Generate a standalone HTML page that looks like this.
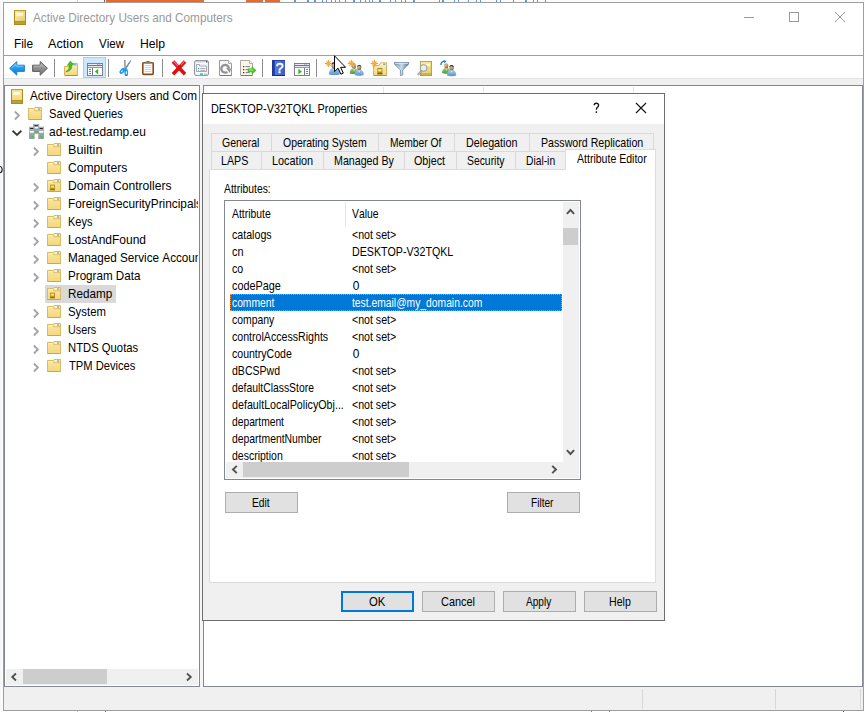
<!DOCTYPE html>
<html>
<head>
<meta charset="utf-8">
<title>Active Directory Users and Computers</title>
<style>
*{box-sizing:border-box;margin:0;padding:0}
html,body{width:865px;height:712px;overflow:hidden;background:#fff}
body{position:relative;font-kerning:none;font-family:"Liberation Sans",sans-serif;font-size:12px;color:#000}
.abs{position:absolute}
.t{position:absolute;white-space:nowrap;line-height:14px}
svg{position:absolute;overflow:visible}
#bgl{left:0;top:0;width:4px;height:712px;background:linear-gradient(90deg,#f7f7f7,#fcfcfc)}
#win{left:3px;top:2px;width:861px;height:709px;border:1px solid #9e9e9e;background:#fff}
#client{left:4px;top:79px;width:859px;height:631px;background:#f0f0f0}
#title{left:33px;top:10px;color:#999;font-size:12.4px;letter-spacing:-0.2px}
.menu{top:37px;font-size:12.4px;letter-spacing:-0.25px}
#tbline{left:4px;top:55px;width:859px;height:1px;background:#a0a0a0}
#tbline2{left:4px;top:78px;width:859px;height:1px;background:#e3e3e3}
.tsep{position:absolute;top:59px;width:1px;height:18px;background:#8c8c8c}
#tree{left:4px;top:85px;width:196px;height:602px;border:1px solid #828790;background:#fff;overflow:hidden}
#right{left:203px;top:85px;width:660px;height:602px;border:1px solid #828790;background:#fff}
.ti{position:absolute;white-space:nowrap;font-size:12.4px;line-height:18px;height:18px;letter-spacing:-0.2px}
.chev{position:absolute}
#dlg{left:202px;top:93px;width:463px;height:528px;border:1px solid #6d6d6d;background:#f0f0f0}
#dtitle{left:0;top:0;width:461px;height:30px;background:#fff}
.tab{position:absolute;height:19px;border:1px solid #d9d9d9;border-bottom:none;border-right:none;background:#f0f0f0;font-size:11.5px;line-height:17px;white-space:nowrap;letter-spacing:-0.3px}
.tab span{position:absolute;top:1px}
#panel{left:7px;top:75px;width:447px;height:415px;border:1px solid #dcdcdc;background:#fff}
.btn{position:absolute;height:21px;width:73px;border:1px solid #adadad;background:#e1e1e1;font-size:11.5px;letter-spacing:-0.3px}
.btn span{position:absolute;top:3px;line-height:14px;white-space:nowrap}
#list{left:21px;top:106px;width:357px;height:280px;border:1px solid #828790;background:#fff}
.lt{position:absolute;white-space:nowrap;font-size:11.5px;line-height:14px;letter-spacing:-0.3px}
</style>
</head>
<body>
<div class="abs" id="bgl"></div>
<div class="abs" style="left:0;top:0;width:865px;height:2px;background:#fbfbfb"></div>
<div class="abs" style="left:77px;top:0;width:1px;height:2px;background:#ccc"></div>
<div class="abs" style="left:104px;top:0;width:1px;height:2px;background:#666"></div>
<div class="abs" style="left:106px;top:0;width:98px;height:2px;background:#f26522"></div>
<div class="abs" style="left:246px;top:0;width:17px;height:2px;background:#f26522"></div>
<div class="abs" style="left:265px;top:0;width:15px;height:2px;background:#f26522"></div>
<svg style="left:0;top:0" width="865" height="2" viewBox="0 0 865 2"><rect x="294" y="0" width="2" height="2" fill="#5b9bdf"/><rect x="307" y="0" width="2" height="2" fill="#5b9bdf"/><rect x="314" y="0" width="2" height="2" fill="#5b9bdf"/><rect x="322" y="0" width="1" height="2" fill="#5b9bdf"/><rect x="326" y="0" width="1" height="2" fill="#5b9bdf"/><rect x="331" y="0" width="1" height="2" fill="#5b9bdf"/><rect x="335" y="0" width="1" height="2" fill="#5b9bdf"/><rect x="339" y="0" width="1" height="2" fill="#5b9bdf"/><rect x="345" y="0" width="1" height="2" fill="#5b9bdf"/><rect x="353" y="0" width="2" height="2" fill="#5b9bdf"/><rect x="360" y="0" width="1" height="2" fill="#5b9bdf"/><rect x="365" y="0" width="1" height="2" fill="#5b9bdf"/><rect x="369" y="0" width="1" height="2" fill="#5b9bdf"/><rect x="372" y="0" width="1" height="2" fill="#5b9bdf"/><rect x="379" y="0" width="2" height="2" fill="#5b9bdf"/><rect x="390" y="0" width="1" height="2" fill="#5b9bdf"/><rect x="395" y="0" width="1" height="2" fill="#5b9bdf"/><rect x="401" y="0" width="1" height="2" fill="#5b9bdf"/><rect x="405" y="0" width="1" height="2" fill="#5b9bdf"/><rect x="413" y="0" width="2" height="2" fill="#5b9bdf"/><rect x="439" y="0" width="1" height="2" fill="#5b9bdf"/><rect x="442" y="0" width="2" height="2" fill="#5b9bdf"/><rect x="454" y="0" width="1" height="2" fill="#5b9bdf"/><rect x="458" y="0" width="1" height="2" fill="#5b9bdf"/><rect x="468" y="0" width="1" height="2" fill="#5b9bdf"/><rect x="476" y="0" width="1" height="2" fill="#5b9bdf"/><rect x="480" y="0" width="1" height="2" fill="#5b9bdf"/><rect x="496" y="0" width="1" height="2" fill="#5b9bdf"/><rect x="500" y="0" width="1" height="2" fill="#5b9bdf"/><rect x="513" y="0" width="1" height="2" fill="#5b9bdf"/><rect x="525" y="0" width="2" height="2" fill="#5b9bdf"/><rect x="533" y="0" width="1" height="2" fill="#5b9bdf"/><rect x="537" y="0" width="1" height="2" fill="#5b9bdf"/><rect x="545" y="0" width="1" height="2" fill="#5b9bdf"/></svg>
<svg style="left:0;top:711px" width="865" height="1" viewBox="0 0 865 1"><rect x="77" y="0" width="1" height="1" fill="#c8c8c8"/><rect x="105" y="0" width="1" height="1" fill="#777"/><rect x="591" y="0" width="1" height="1" fill="#888"/><rect x="609" y="0" width="1" height="1" fill="#888"/><rect x="843" y="0" width="1" height="1" fill="#555"/></svg>
<svg style="left:0;top:165px" width="3" height="9" viewBox="0 0 3 9"><path d="M-0.5 1.2 C3 1.2,3 7.8,-0.5 7.8" fill="none" stroke="#222" stroke-width="1.2"/></svg>
<div class="abs" id="win">
<svg style="left:10px;top:7px" width="12" height="15" viewBox="0 0 12 15">
<defs><linearGradient id="gbk" x1="0" y1="0" x2="1" y2="1"><stop offset="0" stop-color="#fbf0b4"/><stop offset="1" stop-color="#e6cc68"/></linearGradient></defs>
<rect x="0" y="0" width="12" height="15" fill="#b08a1c"/><rect x="1" y="1" width="10" height="10.5" fill="url(#gbk)"/>
<rect x="0" y="0" width="12" height="1.2" fill="#c4a030"/><rect x="2.5" y="2.8" width="6.5" height="3" fill="#fffbd6"/>
<rect x="1" y="11.3" width="10" height="2.6" fill="#bfa238"/><rect x="1" y="11.3" width="10" height="0.8" fill="#a88a24"/>
</svg>
<div class="lt" style="left:29.38px;top:8.00px;font-size:12.4px;line-height:14px;letter-spacing:0;transform:scaleX(0.9468);transform-origin:0 0;color:#999">Active Directory Users and Computers</div>
<svg style="left:740px;top:9px" width="110" height="14" viewBox="0 0 110 14">
<path d="M0 5.5H10" stroke="#999" stroke-width="1" fill="none"/>
<rect x="45.5" y="0.5" width="9" height="9" stroke="#999" stroke-width="1" fill="none"/>
<path d="M91 0L101 10M101 0L91 10" stroke="#999" stroke-width="1" fill="none"/>
</svg>
<div class="lt" style="left:9.73px;top:34.00px;font-size:12.4px;line-height:14px;letter-spacing:0;transform:scaleX(0.9559);transform-origin:0 0">File</div>
<div class="lt" style="left:44.18px;top:34.00px;font-size:12.4px;line-height:14px;letter-spacing:0;transform:scaleX(1.0228);transform-origin:0 0">Action</div>
<div class="lt" style="left:94.75px;top:34.00px;font-size:12.4px;line-height:14px;letter-spacing:0;transform:scaleX(0.9310);transform-origin:0 0">View</div>
<div class="lt" style="left:135.80px;top:34.00px;font-size:12.4px;line-height:14px;letter-spacing:0;transform:scaleX(0.9848);transform-origin:0 0">Help</div>
</div>
<div class="abs" id="tbline"></div>
<div class="abs" id="client"></div>
<div class="abs" id="tbline2"></div>
<svg width="0" height="0"><defs>
<linearGradient id="gblue" x1="0" y1="0" x2="0" y2="1"><stop offset="0" stop-color="#5cc0ff"/><stop offset="0.5" stop-color="#1e9cf0"/><stop offset="1" stop-color="#0a6fd0"/></linearGradient>
<linearGradient id="ggray" x1="0" y1="0" x2="0" y2="1"><stop offset="0" stop-color="#b0b0b0"/><stop offset="0.5" stop-color="#8e8e8e"/><stop offset="1" stop-color="#787878"/></linearGradient>
<linearGradient id="gfold" x1="0" y1="0" x2="0" y2="1"><stop offset="0" stop-color="#fcefb8"/><stop offset="1" stop-color="#f5d880"/></linearGradient>
<linearGradient id="ghelp" x1="0" y1="0" x2="1" y2="0"><stop offset="0" stop-color="#1d3494"/><stop offset="0.22" stop-color="#2a46b0"/><stop offset="0.24" stop-color="#5878dc"/><stop offset="1" stop-color="#3a5cc8"/></linearGradient>
<linearGradient id="gfun" x1="0" y1="0" x2="1" y2="0"><stop offset="0" stop-color="#56789a"/><stop offset="0.5" stop-color="#c9dbe8"/><stop offset="1" stop-color="#4f7190"/></linearGradient>
<linearGradient id="ggold" x1="0" y1="0" x2="1" y2="1"><stop offset="0" stop-color="#f9ecaa"/><stop offset="1" stop-color="#e8cf62"/></linearGradient>
<radialGradient id="ghead" cx="0.4" cy="0.35" r="0.7"><stop offset="0" stop-color="#e9c9a0"/><stop offset="1" stop-color="#8a5a2c"/></radialGradient>
<linearGradient id="gbodyb" x1="0" y1="0" x2="0" y2="1"><stop offset="0" stop-color="#a8cdf2"/><stop offset="1" stop-color="#5b93d0"/></linearGradient>
<linearGradient id="gbodyg" x1="0" y1="0" x2="0" y2="1"><stop offset="0" stop-color="#9ccf7a"/><stop offset="1" stop-color="#4f9a3a"/></linearGradient>
</defs></svg>
<div class="tsep" style="left:54px"></div>
<div class="tsep" style="left:108px"></div>
<div class="tsep" style="left:162px"></div>
<div class="tsep" style="left:262px"></div>
<div class="tsep" style="left:316px"></div>
<svg style="left:9px;top:61px" width="16" height="15" viewBox="0 0 16 15"><path d="M0.6 7.3 L7.8 0.6 L7.8 4.2 L15.4 4.2 L15.4 10.4 L7.8 10.4 L7.8 14.2 Z" fill="url(#gblue)" stroke="#2a7fd0" stroke-width="1" stroke-linejoin="round"/><path d="M2.5 7.3 L7 3.2 L7 5.2 L14.4 5.2" fill="none" stroke="#9bd8ff" stroke-width="0.8" opacity="0.8"/></svg>
<svg style="left:32px;top:61px" width="16" height="15" viewBox="0 0 16 15"><path d="M15.4 7.3 L8.2 0.6 L8.2 4.2 L0.6 4.2 L0.6 10.4 L8.2 10.4 L8.2 14.2 Z" fill="url(#ggray)" stroke="#5c5c5c" stroke-width="1" stroke-linejoin="round"/><path d="M1.6 5.2 L9 5.2 L9 3.2 L13.5 7.3" fill="none" stroke="#d0d0d0" stroke-width="0.8" opacity="0.7"/></svg>
<svg style="left:64px;top:61px" width="14" height="15" viewBox="0 0 14 15"><path d="M0.5 5.5 L7 5.5 L8.5 2.5 L13.5 2.5 L13.5 14.5 L0.5 14.5Z" fill="url(#gfold)" stroke="#d6b458" stroke-width="1"/><rect x="9.5" y="3.2" width="3" height="1.2" fill="#6aa5ea"/><path d="M1 14.5H13.5" stroke="#b98f30" stroke-width="1"/><path d="M1.8 10.8 C4.6 9.6,5.6 6.8,5.4 4 L3.4 4.4 L6.2 0.2 L9.6 3.2 L7.8 3.6 C8.4 8,5.6 10.6,1.8 10.8Z" fill="#3fc41f" stroke="#2a9a12" stroke-width="0.6"/></svg>
<div class="abs" style="left:83px;top:57px;width:23px;height:21px;background:#cce8ff;border:1px solid #99d1ff"></div>
<svg style="left:87px;top:63px" width="16" height="13" viewBox="0 0 16 13"><rect x="0.5" y="0.5" width="15" height="12" fill="#fff" stroke="#7e808e" stroke-width="1"/><rect x="1" y="1" width="14" height="1" fill="#eceef4"/><rect x="11.3" y="1" width="1.2" height="1" fill="#fff"/><rect x="13.3" y="1" width="1.2" height="1" fill="#fff"/><rect x="10.3" y="1" width="1" height="1" fill="#8a90a0"/><rect x="12.5" y="1" width="0.8" height="1" fill="#8a90a0"/><rect x="1" y="2" width="14" height="1" fill="#6c768a"/><rect x="1" y="3" width="14" height="1" fill="#e4e7ee"/><rect x="1" y="4" width="14" height="1" fill="#9299a8"/><rect x="5" y="5" width="1" height="7" fill="#6c7a92"/><rect x="1.9" y="6" width="2.2" height="1" rx="0.4" fill="#2f7fe0"/><rect x="1.9" y="8" width="2.2" height="1" rx="0.4" fill="#2f7fe0"/><rect x="1.9" y="10" width="2.2" height="1" rx="0.4" fill="#2f7fe0"/><path d="M11.2 5.8 L11.2 11.4 L7.8 8.6Z" fill="#35b81c"/></svg>
<svg style="left:119px;top:60px" width="13" height="16" viewBox="0 0 13 16"><path d="M5 0.1 L6.5 0.1 L6.9 8.6 L5.5 8.8Z" fill="#78828c"/><path d="M5.9 0.3 L6.4 8" stroke="#c8d0d8" stroke-width="0.5"/><path d="M11.3 0.3 L12.2 1 L7.2 9 L5.8 8.2Z" fill="#5a6670"/><path d="M11.5 1 L6.6 8.4" stroke="#e8eef4" stroke-width="0.7" stroke-dasharray="0.9 0.9"/><ellipse cx="3.3" cy="10.9" rx="3.4" ry="2.1" transform="rotate(-48 3.3 10.9)" fill="#1a9cf0"/><ellipse cx="2.9" cy="11.2" rx="1.2" ry="0.55" transform="rotate(-48 2.9 11.2)" fill="#fff"/><ellipse cx="7.2" cy="12.2" rx="1.9" ry="3.7" transform="rotate(-4 7.2 12.2)" fill="#1a9cf0"/><ellipse cx="7.4" cy="12.7" rx="0.6" ry="1.6" fill="#fff"/><path d="M5.6 15 Q7.2 16.3 8.8 15" fill="none" stroke="#0a60b0" stroke-width="0.7"/></svg>
<svg style="left:142px;top:61px" width="12" height="14" viewBox="0 0 12 14"><rect x="0.8" y="1.8" width="10.4" height="11.6" rx="1" fill="#fff" stroke="#8a4a16" stroke-width="1.6"/><path d="M2.5 4.5H9.5M2.5 6.5H9.5M2.5 8.5H9.5M2.5 10.5H9.5" stroke="#a8c4e0" stroke-width="0.7"/><rect x="3.5" y="0.6" width="5" height="2.2" fill="#8a8a8a"/><rect x="4.5" y="0" width="3" height="1.2" fill="#6a6a6a"/></svg>
<svg style="left:171px;top:60px" width="16" height="16" viewBox="0 0 16 16"><path d="M2 1.6 L14 14.2 M14 1.6 L2 14.2" stroke="#e01010" stroke-width="3.6" stroke-linecap="butt"/><path d="M2.4 1.2 L7 6" stroke="#ff8080" stroke-width="1.2" opacity="0.8"/><path d="M13.6 1.2 L10 5" stroke="#ff8080" stroke-width="1.2" opacity="0.8"/></svg>
<svg style="left:194px;top:60px" width="15" height="16" viewBox="0 0 15 16"><rect x="0.6" y="0.6" width="13.8" height="14.8" rx="1.4" fill="#fafbfd" stroke="#8a8c9a" stroke-width="1"/><rect x="1.4" y="1.3" width="12.2" height="1" fill="#b9bcc8"/><rect x="12" y="1" width="1.5" height="1.5" fill="#5a6a9a"/><path d="M2.5 11.5 L2.5 4.5 L5.5 4.5 L5.5 6 L12.5 6 L12.5 11.5Z" fill="#fff" stroke="#9a9eb0" stroke-width="0.9"/><rect x="6.5" y="4.6" width="2" height="1" fill="#c8cad4"/><rect x="9.5" y="4.6" width="2" height="1" fill="#c8cad4"/><rect x="4" y="7.7" width="1.2" height="1.2" fill="#1ea0f0"/><rect x="4" y="9.7" width="1.2" height="1" fill="#999"/><rect x="6.2" y="7.9" width="5" height="0.9" fill="#9a9a9a"/><rect x="6.2" y="9.8" width="5" height="0.9" fill="#9a9a9a"/><rect x="6" y="13.4" width="3" height="1.4" fill="#28a8f0"/><rect x="10" y="13.4" width="3" height="1.4" fill="#c0c0c8"/></svg>
<svg style="left:219px;top:60px" width="13" height="16" viewBox="0 0 13 16"><path d="M0.5 0.5 L9.5 0.5 L12.5 3.5 L12.5 15.5 L0.5 15.5Z" fill="#fafafa" stroke="#9a9a9a" stroke-width="1"/><path d="M9.5 0.5 L9.5 3.5 L12.5 3.5" fill="#fff" stroke="#9a9a9a" stroke-width="0.8"/><path d="M9.9 8.2 A3.8 3.8 0 1 0 8.4 11.8" fill="none" stroke="#929292" stroke-width="2.3"/><path d="M7 7.8 L12 8.4 L10.8 13Z" fill="#929292"/><path d="M1 15.5H12.5" stroke="#777" stroke-width="1"/></svg>
<svg style="left:240px;top:60px" width="17" height="16" viewBox="0 0 17 16"><path d="M0.5 0.5 L9.5 0.5 L12.5 3.5 L12.5 15.5 L0.5 15.5Z" fill="#fdf5dc" stroke="#a8a8a8" stroke-width="1"/><path d="M9.5 0.5 L9.5 3.5 L12.5 3.5" fill="#fff" stroke="#a0a0a0" stroke-width="0.8"/><path d="M1 15.5H12.5" stroke="#7a7a7a" stroke-width="1"/><rect x="3" y="6" width="1.2" height="1.2" fill="#222"/><rect x="3" y="9" width="1.2" height="1.2" fill="#222"/><rect x="3" y="12" width="1.2" height="1.2" fill="#222"/><rect x="5.5" y="6.2" width="4.5" height="0.9" fill="#6a6aa8"/><rect x="5.5" y="9.2" width="3" height="0.9" fill="#6a6aa8"/><rect x="5.5" y="12.2" width="4" height="0.9" fill="#6a6aa8"/><path d="M8 8.8 L12 8.8 L12 6.8 L16.2 10.4 L12 14 L12 12 L8 12Z" fill="#4cc828" stroke="#38a818" stroke-width="0.5"/><path d="M9 10 H13" stroke="#b8f0a0" stroke-width="0.9"/></svg>
<svg style="left:272px;top:60px" width="13" height="16" viewBox="0 0 13 16"><rect x="0" y="0" width="13" height="16" fill="url(#ghelp)"/><rect x="0" y="15" width="13" height="1" fill="#1a2c80"/><rect x="0" y="0" width="13" height="0.8" fill="#2038a0"/><text x="7.6" y="13.3" font-family="Liberation Sans" font-size="14" fill="#fff" stroke="#fff" stroke-width="0.5" text-anchor="middle">?</text></svg>
<svg style="left:294px;top:63px" width="16" height="13" viewBox="0 0 16 13"><rect x="0.5" y="0.5" width="15" height="12" fill="#fff" stroke="#7e808e" stroke-width="1"/><rect x="1" y="1" width="14" height="1" fill="#eceef4"/><rect x="11.3" y="1" width="1.2" height="1" fill="#fff"/><rect x="13.3" y="1" width="1.2" height="1" fill="#fff"/><rect x="10.3" y="1" width="1" height="1" fill="#8a90a0"/><rect x="12.5" y="1" width="0.8" height="1" fill="#8a90a0"/><rect x="1" y="2" width="14" height="1" fill="#6c768a"/><rect x="1" y="3" width="14" height="1" fill="#e4e7ee"/><rect x="1" y="4" width="14" height="1" fill="#9299a8"/><rect x="10" y="5" width="1" height="7" fill="#6c7a92"/><rect x="11.9" y="6" width="2.2" height="1" rx="0.4" fill="#2f7fe0"/><rect x="11.9" y="8" width="2.2" height="1" rx="0.4" fill="#2f7fe0"/><rect x="11.9" y="10" width="2.2" height="1" rx="0.4" fill="#2f7fe0"/><path d="M4.4 5.8 L4.4 11.4 L7.8 8.6Z" fill="#35b81c"/></svg>
<svg style="left:325px;top:60px" width="15" height="16" viewBox="0 0 15 16"><path d="M4.00 14.32 C4.00 9.46,6.70 7.84,9.40 7.84 C12.10 7.84,14.80 9.46,14.80 14.32 C12.64 15.51,6.16 15.51,4.00 14.32Z" fill="url(#gbodyb)"/><path d="M8.32 8.38 L9.40 11.62 L10.48 8.38Z" fill="#fff" opacity="0.85"/><ellipse cx="9.40" cy="5.36" rx="2.91" ry="3.71" fill="url(#ghead)"/><path d="M6.49 4.71 C6.49 1.47,12.31 1.47,12.31 4.71 C10.37 3.20,8.43 3.20,6.49 4.71Z" fill="#3a3026"/><path d="M3.40 3.50 L6.50 3.50" stroke="#f7a01e" stroke-width="1.1" stroke-linecap="round"/><path d="M3.40 3.50 L5.17 5.27" stroke="#f7a01e" stroke-width="1.1" stroke-linecap="round"/><path d="M3.40 3.50 L3.40 6.60" stroke="#f7a01e" stroke-width="1.1" stroke-linecap="round"/><path d="M3.40 3.50 L1.63 5.27" stroke="#f7a01e" stroke-width="1.1" stroke-linecap="round"/><path d="M3.40 3.50 L0.30 3.50" stroke="#f7a01e" stroke-width="1.1" stroke-linecap="round"/><path d="M3.40 3.50 L1.63 1.73" stroke="#f7a01e" stroke-width="1.1" stroke-linecap="round"/><path d="M3.40 3.50 L3.40 0.40" stroke="#f7a01e" stroke-width="1.1" stroke-linecap="round"/><path d="M3.40 3.50 L5.17 1.73" stroke="#f7a01e" stroke-width="1.1" stroke-linecap="round"/><circle cx="3.4" cy="3.5" r="1.6" fill="#fbb034"/></svg>
<svg style="left:348px;top:60px" width="16" height="16" viewBox="0 0 16 16"><path d="M1.75 13.38 C1.75 9.55,3.88 8.28,6.00 8.28 C8.12 8.28,10.25 9.55,10.25 13.38 C8.55 14.31,3.45 14.31,1.75 13.38Z" fill="url(#gbodyg)"/><path d="M5.15 8.70 L6.00 11.25 L6.85 8.70Z" fill="#fff" opacity="0.85"/><ellipse cx="6.00" cy="6.32" rx="1.99" ry="2.54" fill="url(#ghead)"/><path d="M4.01 5.81 C4.01 3.26,7.99 3.26,7.99 5.81 C6.66 4.62,5.34 4.62,4.01 5.81Z" fill="#c9a860"/><path d="M6.70 14.95 C6.70 10.90,8.95 9.55,11.20 9.55 C13.45 9.55,15.70 10.90,15.70 14.95 C13.90 15.94,8.50 15.94,6.70 14.95Z" fill="url(#gbodyb)"/><path d="M10.30 10.00 L11.20 12.70 L12.10 10.00Z" fill="#fff" opacity="0.85"/><ellipse cx="11.20" cy="7.48" rx="2.11" ry="2.69" fill="url(#ghead)"/><path d="M9.09 6.94 C9.09 4.24,13.31 4.24,13.31 6.94 C11.90 5.68,10.50 5.68,9.09 6.94Z" fill="#3a3026"/><path d="M3.40 3.40 L6.50 3.40" stroke="#f7a01e" stroke-width="1.1" stroke-linecap="round"/><path d="M3.40 3.40 L5.17 5.17" stroke="#f7a01e" stroke-width="1.1" stroke-linecap="round"/><path d="M3.40 3.40 L3.40 6.50" stroke="#f7a01e" stroke-width="1.1" stroke-linecap="round"/><path d="M3.40 3.40 L1.63 5.17" stroke="#f7a01e" stroke-width="1.1" stroke-linecap="round"/><path d="M3.40 3.40 L0.30 3.40" stroke="#f7a01e" stroke-width="1.1" stroke-linecap="round"/><path d="M3.40 3.40 L1.63 1.63" stroke="#f7a01e" stroke-width="1.1" stroke-linecap="round"/><path d="M3.40 3.40 L3.40 0.30" stroke="#f7a01e" stroke-width="1.1" stroke-linecap="round"/><path d="M3.40 3.40 L5.17 1.63" stroke="#f7a01e" stroke-width="1.1" stroke-linecap="round"/><circle cx="3.4" cy="3.4" r="1.6" fill="#fbb034"/></svg>
<svg style="left:371px;top:60px" width="16" height="16" viewBox="0 0 16 16"><path d="M2.5 5.5 L8 5.5 L9.5 2.8 L15.5 2.8 L15.5 15.5 L2.5 15.5Z" fill="url(#gfold)" stroke="#d6b458" stroke-width="1"/><rect x="10.3" y="3.6" width="2" height="1.2" fill="#fff"/><rect x="12.2" y="3.6" width="2" height="1.2" fill="#4a90e8"/><rect x="6.4" y="8" width="5" height="6.4" fill="#a88a1c"/><rect x="7.2" y="9" width="3.4" height="2.6" fill="#f0e08a"/><rect x="6.4" y="13" width="5" height="1.2" fill="#7a6210"/><path d="M3 15.5H15.5" stroke="#b98f30" stroke-width="1"/><path d="M3.40 3.40 L6.50 3.40" stroke="#f7a01e" stroke-width="1.1" stroke-linecap="round"/><path d="M3.40 3.40 L5.17 5.17" stroke="#f7a01e" stroke-width="1.1" stroke-linecap="round"/><path d="M3.40 3.40 L3.40 6.50" stroke="#f7a01e" stroke-width="1.1" stroke-linecap="round"/><path d="M3.40 3.40 L1.63 5.17" stroke="#f7a01e" stroke-width="1.1" stroke-linecap="round"/><path d="M3.40 3.40 L0.30 3.40" stroke="#f7a01e" stroke-width="1.1" stroke-linecap="round"/><path d="M3.40 3.40 L1.63 1.63" stroke="#f7a01e" stroke-width="1.1" stroke-linecap="round"/><path d="M3.40 3.40 L3.40 0.30" stroke="#f7a01e" stroke-width="1.1" stroke-linecap="round"/><path d="M3.40 3.40 L5.17 1.63" stroke="#f7a01e" stroke-width="1.1" stroke-linecap="round"/><circle cx="3.4" cy="3.4" r="1.6" fill="#fbb034"/></svg>
<svg style="left:394px;top:62px" width="15" height="14" viewBox="0 0 15 14"><path d="M0.3 0.5 L14.7 0.5 L14.7 2 L8.8 8 L8.8 13 L6.4 13.6 L6.4 8 L0.3 2Z" fill="url(#gfun)" stroke="#4f7190" stroke-width="0.6"/><rect x="0.8" y="0.9" width="13.4" height="0.9" fill="#dfeaf2"/><path d="M2 2.6 L7 7.6" stroke="#e8f0f6" stroke-width="0.9" opacity="0.8"/></svg>
<svg style="left:417px;top:61px" width="16" height="15" viewBox="0 0 16 15"><rect x="3" y="0" width="12" height="15" fill="#b8982c"/><rect x="3.8" y="0.8" width="10.4" height="11.4" fill="url(#ggold)"/><rect x="8" y="2.6" width="5" height="2.6" fill="#fff8c8"/><rect x="3.8" y="12.2" width="10.4" height="2" fill="#d0b650"/><path d="M5 9.8 L0.8 13.8" stroke="#8a8a8a" stroke-width="2"/><path d="M4.6 10.2 L1 13.6" stroke="#e8e8e8" stroke-width="0.8"/><circle cx="6.6" cy="7" r="3.3" fill="#e4f0f4" fill-opacity="0.9" stroke="#9aa6b0" stroke-width="1.1"/><circle cx="6.2" cy="6.6" r="1.6" fill="#f6f6d8" opacity="0.7"/></svg>
<svg style="left:440px;top:60px" width="17" height="16" viewBox="0 0 17 16"><path d="M0.9 5 C0.7 2.6,2.4 1.2,4.4 1.4" fill="none" stroke="#1a78d8" stroke-width="1.3"/><path d="M3.6 0 L6.4 1 L4.6 3.4Z" fill="#1a78d8"/><path d="M2.05 12.98 C2.05 9.15,4.17 7.88,6.30 7.88 C8.43 7.88,10.55 9.15,10.55 12.98 C8.85 13.91,3.75 13.91,2.05 12.98Z" fill="url(#gbodyg)"/><path d="M5.45 8.30 L6.30 10.85 L7.15 8.30Z" fill="#fff" opacity="0.85"/><ellipse cx="6.30" cy="5.92" rx="1.99" ry="2.54" fill="url(#ghead)"/><path d="M4.31 5.41 C4.31 2.86,8.29 2.86,8.29 5.41 C6.96 4.22,5.64 4.22,4.31 5.41Z" fill="#c9a860"/><path d="M7.00 15.38 C7.00 11.24,9.30 9.86,11.60 9.86 C13.90 9.86,16.20 11.24,16.20 15.38 C14.36 16.39,8.84 16.39,7.00 15.38Z" fill="url(#gbodyb)"/><path d="M10.68 10.32 L11.60 13.08 L12.52 10.32Z" fill="#fff" opacity="0.85"/><ellipse cx="11.60" cy="7.74" rx="2.15" ry="2.75" fill="url(#ghead)"/><path d="M9.45 7.19 C9.45 4.43,13.75 4.43,13.75 7.19 C12.32 5.90,10.88 5.90,9.45 7.19Z" fill="#3a3026"/></svg>
<div class="abs" style="left:200px;top:85px;width:3px;height:603px;background:#f6f6f6"></div>
<div class="abs" id="tree">
<svg width="0" height="0"><defs><linearGradient id="gfo" x1="0" y1="0" x2="0" y2="1"><stop offset="0" stop-color="#fbe9a6"/><stop offset="1" stop-color="#f4d67c"/></linearGradient></defs></svg>
<svg style="left:6px;top:3px" width="12" height="15" viewBox="0 0 12 15">
<rect x="0" y="0" width="12" height="15" fill="#b08a1c"/><rect x="1" y="1" width="10" height="10.5" fill="url(#gfo)"/>
<rect x="0" y="0" width="12" height="1.2" fill="#c4a030"/><rect x="2.5" y="3" width="6.5" height="3" fill="#fffbd6"/><rect x="1" y="11.3" width="10" height="2.6" fill="#bfa238"/><rect x="1" y="11.3" width="10" height="0.8" fill="#a88a24"/></svg>
<div class="lt" style="left:24.98px;top:3.00px;font-size:12.4px;line-height:14px;letter-spacing:0;transform:scaleX(0.9478);transform-origin:0 0">Active Directory Users and Com</div>
<svg style="left:9px;top:25px" width="6" height="9" viewBox="0 0 6 9"><path d="M0.9 0.5 L4.9 4.5 L0.9 8.5" fill="none" stroke="#a3a3a3" stroke-width="1.8"/></svg>
<svg style="left:23px;top:21px" width="14" height="13" viewBox="0 0 14 13"><path d="M0.5 1.5 L6 1.5 L7 0.5 L13.5 0.5 L13.5 12.5 L0.5 12.5 Z" fill="url(#gfo)" stroke="#d8ba62" stroke-width="1"/><path d="M6.5 1.5 L6.5 3.7 L13.5 3.7" fill="none" stroke="#dcc06c" stroke-width="1"/><rect x="1.2" y="2.2" width="5" height="1" fill="#fdf3c4"/><rect x="7.8" y="1.4" width="2.4" height="1.1" rx="0.5" fill="#fff"/><rect x="10" y="1.4" width="2.1" height="1.1" rx="0.55" fill="#3a8ee6"/><path d="M0.5 12.5H13.5" stroke="#c9a74e" stroke-width="1"/></svg>
<div class="lt" style="left:44.19px;top:21.00px;font-size:12.4px;line-height:14px;letter-spacing:0;transform:scaleX(0.8999);transform-origin:0 0">Saved Queries</div>
<svg style="left:7px;top:44px" width="10" height="6" viewBox="0 0 10 6"><path d="M0.6 0.8 L5 5 L9.4 0.8" fill="none" stroke="#3c3c3c" stroke-width="1.9"/></svg>
<svg style="left:24px;top:38px" width="15" height="15" viewBox="0 0 15 15">
<defs><linearGradient id="gsrv" x1="0" y1="0" x2="0" y2="1"><stop offset="0" stop-color="#b4bcc4"/><stop offset="1" stop-color="#8a949e"/></linearGradient></defs>
<rect x="4.2" y="0.2" width="5.8" height="9.2" fill="url(#gsrv)" stroke="#8a949e" stroke-width="0.4"/>
<rect x="5.3" y="1.2" width="3.6" height="1" fill="#1e2228"/><rect x="4.7" y="2.9" width="4.8" height="1.5" fill="#ffffff"/>
<rect x="0.2" y="3" width="5.2" height="11.8" fill="url(#gsrv)" stroke="#8a949e" stroke-width="0.4"/>
<rect x="9.6" y="3" width="5.2" height="11.8" fill="url(#gsrv)" stroke="#8a949e" stroke-width="0.4"/>
<rect x="1.2" y="4" width="3.2" height="1" fill="#1e2228"/><rect x="10.6" y="4" width="3.2" height="1" fill="#1e2228"/>
<rect x="0.7" y="7" width="4.2" height="1.7" fill="#ffffff"/><rect x="10.1" y="7" width="4.2" height="1.7" fill="#ffffff"/>

<rect x="6.6" y="7.4" width="1.8" height="1.8" fill="#46d21a"/>
<rect x="2.6" y="12" width="1.8" height="1.8" fill="#46d21a"/><rect x="12" y="12" width="1.8" height="1.8" fill="#46d21a"/>
</svg>
<div class="lt" style="left:44.19px;top:39.00px;font-size:12.4px;line-height:14px;letter-spacing:0;transform:scaleX(0.9629);transform-origin:0 0">ad-test.redamp.eu</div>
<svg style="left:28px;top:61px" width="6" height="9" viewBox="0 0 6 9"><path d="M0.9 0.5 L4.9 4.5 L0.9 8.5" fill="none" stroke="#a3a3a3" stroke-width="1.8"/></svg>
<svg style="left:42px;top:57px" width="14" height="13" viewBox="0 0 14 13"><path d="M0.5 1.5 L6 1.5 L7 0.5 L13.5 0.5 L13.5 12.5 L0.5 12.5 Z" fill="url(#gfo)" stroke="#d8ba62" stroke-width="1"/><path d="M6.5 1.5 L6.5 3.7 L13.5 3.7" fill="none" stroke="#dcc06c" stroke-width="1"/><rect x="1.2" y="2.2" width="5" height="1" fill="#fdf3c4"/><rect x="7.8" y="1.4" width="2.4" height="1.1" rx="0.5" fill="#fff"/><rect x="10" y="1.4" width="2.1" height="1.1" rx="0.55" fill="#3a8ee6"/><path d="M0.5 12.5H13.5" stroke="#c9a74e" stroke-width="1"/></svg>
<div class="lt" style="left:62.76px;top:57.00px;font-size:12.4px;line-height:14px;letter-spacing:0;transform:scaleX(1.0203);transform-origin:0 0">Builtin</div>
<svg style="left:42px;top:75px" width="14" height="13" viewBox="0 0 14 13"><path d="M0.5 1.5 L6 1.5 L7 0.5 L13.5 0.5 L13.5 12.5 L0.5 12.5 Z" fill="url(#gfo)" stroke="#d8ba62" stroke-width="1"/><path d="M6.5 1.5 L6.5 3.7 L13.5 3.7" fill="none" stroke="#dcc06c" stroke-width="1"/><rect x="1.2" y="2.2" width="5" height="1" fill="#fdf3c4"/><rect x="7.8" y="1.4" width="2.4" height="1.1" rx="0.5" fill="#fff"/><rect x="10" y="1.4" width="2.1" height="1.1" rx="0.55" fill="#3a8ee6"/><path d="M0.5 12.5H13.5" stroke="#c9a74e" stroke-width="1"/></svg>
<div class="lt" style="left:63.18px;top:75.00px;font-size:12.4px;line-height:14px;letter-spacing:0;transform:scaleX(0.9771);transform-origin:0 0">Computers</div>
<svg style="left:28px;top:97px" width="6" height="9" viewBox="0 0 6 9"><path d="M0.9 0.5 L4.9 4.5 L0.9 8.5" fill="none" stroke="#a3a3a3" stroke-width="1.8"/></svg>
<svg style="left:42px;top:93px" width="14" height="13" viewBox="0 0 14 13"><path d="M0.5 1.5 L6 1.5 L7 0.5 L13.5 0.5 L13.5 12.5 L0.5 12.5 Z" fill="url(#gfo)" stroke="#d8ba62" stroke-width="1"/><path d="M6.5 1.5 L6.5 3.7 L13.5 3.7" fill="none" stroke="#dcc06c" stroke-width="1"/><rect x="1.2" y="2.2" width="5" height="1" fill="#fdf3c4"/><rect x="7.8" y="1.4" width="2.4" height="1.1" rx="0.5" fill="#fff"/><rect x="10" y="1.4" width="2.1" height="1.1" rx="0.55" fill="#3a8ee6"/><path d="M0.5 12.5H13.5" stroke="#c9a74e" stroke-width="1"/><rect x="3" y="5.6" width="5" height="5.6" fill="#b8961f"/><rect x="3.8" y="6.6" width="3.2" height="2.2" fill="#ecdc80"/><rect x="3" y="10.2" width="5" height="1" fill="#8a6d12"/></svg>
<div class="lt" style="left:62.81px;top:93.00px;font-size:12.4px;line-height:14px;letter-spacing:0;transform:scaleX(0.9755);transform-origin:0 0">Domain Controllers</div>
<svg style="left:28px;top:115px" width="6" height="9" viewBox="0 0 6 9"><path d="M0.9 0.5 L4.9 4.5 L0.9 8.5" fill="none" stroke="#a3a3a3" stroke-width="1.8"/></svg>
<svg style="left:42px;top:111px" width="14" height="13" viewBox="0 0 14 13"><path d="M0.5 1.5 L6 1.5 L7 0.5 L13.5 0.5 L13.5 12.5 L0.5 12.5 Z" fill="url(#gfo)" stroke="#d8ba62" stroke-width="1"/><path d="M6.5 1.5 L6.5 3.7 L13.5 3.7" fill="none" stroke="#dcc06c" stroke-width="1"/><rect x="1.2" y="2.2" width="5" height="1" fill="#fdf3c4"/><rect x="7.8" y="1.4" width="2.4" height="1.1" rx="0.5" fill="#fff"/><rect x="10" y="1.4" width="2.1" height="1.1" rx="0.55" fill="#3a8ee6"/><path d="M0.5 12.5H13.5" stroke="#c9a74e" stroke-width="1"/></svg>
<div class="lt" style="left:62.83px;top:111.00px;font-size:12.4px;line-height:14px;letter-spacing:0;transform:scaleX(0.9538);transform-origin:0 0">ForeignSecurityPrincipals</div>
<svg style="left:28px;top:133px" width="6" height="9" viewBox="0 0 6 9"><path d="M0.9 0.5 L4.9 4.5 L0.9 8.5" fill="none" stroke="#a3a3a3" stroke-width="1.8"/></svg>
<svg style="left:42px;top:129px" width="14" height="13" viewBox="0 0 14 13"><path d="M0.5 1.5 L6 1.5 L7 0.5 L13.5 0.5 L13.5 12.5 L0.5 12.5 Z" fill="url(#gfo)" stroke="#d8ba62" stroke-width="1"/><path d="M6.5 1.5 L6.5 3.7 L13.5 3.7" fill="none" stroke="#dcc06c" stroke-width="1"/><rect x="1.2" y="2.2" width="5" height="1" fill="#fdf3c4"/><rect x="7.8" y="1.4" width="2.4" height="1.1" rx="0.5" fill="#fff"/><rect x="10" y="1.4" width="2.1" height="1.1" rx="0.55" fill="#3a8ee6"/><path d="M0.5 12.5H13.5" stroke="#c9a74e" stroke-width="1"/></svg>
<div class="lt" style="left:62.90px;top:129.00px;font-size:12.4px;line-height:14px;letter-spacing:0;transform:scaleX(0.8888);transform-origin:0 0">Keys</div>
<svg style="left:28px;top:151px" width="6" height="9" viewBox="0 0 6 9"><path d="M0.9 0.5 L4.9 4.5 L0.9 8.5" fill="none" stroke="#a3a3a3" stroke-width="1.8"/></svg>
<svg style="left:42px;top:147px" width="14" height="13" viewBox="0 0 14 13"><path d="M0.5 1.5 L6 1.5 L7 0.5 L13.5 0.5 L13.5 12.5 L0.5 12.5 Z" fill="url(#gfo)" stroke="#d8ba62" stroke-width="1"/><path d="M6.5 1.5 L6.5 3.7 L13.5 3.7" fill="none" stroke="#dcc06c" stroke-width="1"/><rect x="1.2" y="2.2" width="5" height="1" fill="#fdf3c4"/><rect x="7.8" y="1.4" width="2.4" height="1.1" rx="0.5" fill="#fff"/><rect x="10" y="1.4" width="2.1" height="1.1" rx="0.55" fill="#3a8ee6"/><path d="M0.5 12.5H13.5" stroke="#c9a74e" stroke-width="1"/></svg>
<div class="lt" style="left:62.82px;top:147.00px;font-size:12.4px;line-height:14px;letter-spacing:0;transform:scaleX(0.9677);transform-origin:0 0">LostAndFound</div>
<svg style="left:28px;top:169px" width="6" height="9" viewBox="0 0 6 9"><path d="M0.9 0.5 L4.9 4.5 L0.9 8.5" fill="none" stroke="#a3a3a3" stroke-width="1.8"/></svg>
<svg style="left:42px;top:165px" width="14" height="13" viewBox="0 0 14 13"><path d="M0.5 1.5 L6 1.5 L7 0.5 L13.5 0.5 L13.5 12.5 L0.5 12.5 Z" fill="url(#gfo)" stroke="#d8ba62" stroke-width="1"/><path d="M6.5 1.5 L6.5 3.7 L13.5 3.7" fill="none" stroke="#dcc06c" stroke-width="1"/><rect x="1.2" y="2.2" width="5" height="1" fill="#fdf3c4"/><rect x="7.8" y="1.4" width="2.4" height="1.1" rx="0.5" fill="#fff"/><rect x="10" y="1.4" width="2.1" height="1.1" rx="0.55" fill="#3a8ee6"/><path d="M0.5 12.5H13.5" stroke="#c9a74e" stroke-width="1"/></svg>
<div class="lt" style="left:62.84px;top:165.00px;font-size:12.4px;line-height:14px;letter-spacing:0;transform:scaleX(0.9446);transform-origin:0 0">Managed Service Accounts</div>
<svg style="left:28px;top:187px" width="6" height="9" viewBox="0 0 6 9"><path d="M0.9 0.5 L4.9 4.5 L0.9 8.5" fill="none" stroke="#a3a3a3" stroke-width="1.8"/></svg>
<svg style="left:42px;top:183px" width="14" height="13" viewBox="0 0 14 13"><path d="M0.5 1.5 L6 1.5 L7 0.5 L13.5 0.5 L13.5 12.5 L0.5 12.5 Z" fill="url(#gfo)" stroke="#d8ba62" stroke-width="1"/><path d="M6.5 1.5 L6.5 3.7 L13.5 3.7" fill="none" stroke="#dcc06c" stroke-width="1"/><rect x="1.2" y="2.2" width="5" height="1" fill="#fdf3c4"/><rect x="7.8" y="1.4" width="2.4" height="1.1" rx="0.5" fill="#fff"/><rect x="10" y="1.4" width="2.1" height="1.1" rx="0.55" fill="#3a8ee6"/><path d="M0.5 12.5H13.5" stroke="#c9a74e" stroke-width="1"/></svg>
<div class="lt" style="left:62.85px;top:183.00px;font-size:12.4px;line-height:14px;letter-spacing:0;transform:scaleX(0.9387);transform-origin:0 0">Program Data</div>
<div class="abs" style="left:40px;top:199px;width:71px;height:18px;background:#d9d9d9"></div>
<svg style="left:42px;top:201px" width="14" height="13" viewBox="0 0 14 13"><path d="M0.5 1.5 L6 1.5 L7 0.5 L13.5 0.5 L13.5 12.5 L0.5 12.5 Z" fill="url(#gfo)" stroke="#d8ba62" stroke-width="1"/><path d="M6.5 1.5 L6.5 3.7 L13.5 3.7" fill="none" stroke="#dcc06c" stroke-width="1"/><rect x="1.2" y="2.2" width="5" height="1" fill="#fdf3c4"/><rect x="7.8" y="1.4" width="2.4" height="1.1" rx="0.5" fill="#fff"/><rect x="10" y="1.4" width="2.1" height="1.1" rx="0.55" fill="#3a8ee6"/><path d="M0.5 12.5H13.5" stroke="#c9a74e" stroke-width="1"/><rect x="3" y="5.6" width="5" height="5.6" fill="#b8961f"/><rect x="3.8" y="6.6" width="3.2" height="2.2" fill="#ecdc80"/><rect x="3" y="10.2" width="5" height="1" fill="#8a6d12"/></svg>
<div class="lt" style="left:62.84px;top:201.00px;font-size:12.4px;line-height:14px;letter-spacing:0;transform:scaleX(0.9420);transform-origin:0 0">Redamp</div>
<svg style="left:28px;top:223px" width="6" height="9" viewBox="0 0 6 9"><path d="M0.9 0.5 L4.9 4.5 L0.9 8.5" fill="none" stroke="#a3a3a3" stroke-width="1.8"/></svg>
<svg style="left:42px;top:219px" width="14" height="13" viewBox="0 0 14 13"><path d="M0.5 1.5 L6 1.5 L7 0.5 L13.5 0.5 L13.5 12.5 L0.5 12.5 Z" fill="url(#gfo)" stroke="#d8ba62" stroke-width="1"/><path d="M6.5 1.5 L6.5 3.7 L13.5 3.7" fill="none" stroke="#dcc06c" stroke-width="1"/><rect x="1.2" y="2.2" width="5" height="1" fill="#fdf3c4"/><rect x="7.8" y="1.4" width="2.4" height="1.1" rx="0.5" fill="#fff"/><rect x="10" y="1.4" width="2.1" height="1.1" rx="0.55" fill="#3a8ee6"/><path d="M0.5 12.5H13.5" stroke="#c9a74e" stroke-width="1"/></svg>
<div class="lt" style="left:63.28px;top:219.00px;font-size:12.4px;line-height:14px;letter-spacing:0;transform:scaleX(0.9184);transform-origin:0 0">System</div>
<svg style="left:28px;top:241px" width="6" height="9" viewBox="0 0 6 9"><path d="M0.9 0.5 L4.9 4.5 L0.9 8.5" fill="none" stroke="#a3a3a3" stroke-width="1.8"/></svg>
<svg style="left:42px;top:237px" width="14" height="13" viewBox="0 0 14 13"><path d="M0.5 1.5 L6 1.5 L7 0.5 L13.5 0.5 L13.5 12.5 L0.5 12.5 Z" fill="url(#gfo)" stroke="#d8ba62" stroke-width="1"/><path d="M6.5 1.5 L6.5 3.7 L13.5 3.7" fill="none" stroke="#dcc06c" stroke-width="1"/><rect x="1.2" y="2.2" width="5" height="1" fill="#fdf3c4"/><rect x="7.8" y="1.4" width="2.4" height="1.1" rx="0.5" fill="#fff"/><rect x="10" y="1.4" width="2.1" height="1.1" rx="0.55" fill="#3a8ee6"/><path d="M0.5 12.5H13.5" stroke="#c9a74e" stroke-width="1"/></svg>
<div class="lt" style="left:62.97px;top:237.00px;font-size:12.4px;line-height:14px;letter-spacing:0;transform:scaleX(0.8716);transform-origin:0 0">Users</div>
<svg style="left:28px;top:259px" width="6" height="9" viewBox="0 0 6 9"><path d="M0.9 0.5 L4.9 4.5 L0.9 8.5" fill="none" stroke="#a3a3a3" stroke-width="1.8"/></svg>
<svg style="left:42px;top:255px" width="14" height="13" viewBox="0 0 14 13"><path d="M0.5 1.5 L6 1.5 L7 0.5 L13.5 0.5 L13.5 12.5 L0.5 12.5 Z" fill="url(#gfo)" stroke="#d8ba62" stroke-width="1"/><path d="M6.5 1.5 L6.5 3.7 L13.5 3.7" fill="none" stroke="#dcc06c" stroke-width="1"/><rect x="1.2" y="2.2" width="5" height="1" fill="#fdf3c4"/><rect x="7.8" y="1.4" width="2.4" height="1.1" rx="0.5" fill="#fff"/><rect x="10" y="1.4" width="2.1" height="1.1" rx="0.55" fill="#3a8ee6"/><path d="M0.5 12.5H13.5" stroke="#c9a74e" stroke-width="1"/></svg>
<div class="lt" style="left:62.87px;top:255.00px;font-size:12.4px;line-height:14px;letter-spacing:0;transform:scaleX(0.9100);transform-origin:0 0">NTDS Quotas</div>
<svg style="left:28px;top:277px" width="6" height="9" viewBox="0 0 6 9"><path d="M0.9 0.5 L4.9 4.5 L0.9 8.5" fill="none" stroke="#a3a3a3" stroke-width="1.8"/></svg>
<svg style="left:42px;top:273px" width="14" height="13" viewBox="0 0 14 13"><path d="M0.5 1.5 L6 1.5 L7 0.5 L13.5 0.5 L13.5 12.5 L0.5 12.5 Z" fill="url(#gfo)" stroke="#d8ba62" stroke-width="1"/><path d="M6.5 1.5 L6.5 3.7 L13.5 3.7" fill="none" stroke="#dcc06c" stroke-width="1"/><rect x="1.2" y="2.2" width="5" height="1" fill="#fdf3c4"/><rect x="7.8" y="1.4" width="2.4" height="1.1" rx="0.5" fill="#fff"/><rect x="10" y="1.4" width="2.1" height="1.1" rx="0.55" fill="#3a8ee6"/><path d="M0.5 12.5H13.5" stroke="#c9a74e" stroke-width="1"/></svg>
<div class="lt" style="left:63.55px;top:273.00px;font-size:12.4px;line-height:14px;letter-spacing:0;transform:scaleX(0.9014);transform-origin:0 0">TPM Devices</div>
<div class="abs" style="left:193px;top:0;width:1px;height:600px;background:#fff"></div>
<div class="abs" style="left:1px;top:583px;width:192px;height:16px;background:#f0f0f0"></div>
<div class="abs" style="left:18px;top:583px;width:84px;height:15px;background:#cdcdcd"></div>
<svg style="left:6px;top:587px" width="6" height="8" viewBox="0 0 6 8"><path d="M5 0.5 L1.2 4 L5 7.5" fill="none" stroke="#505050" stroke-width="1.8"/></svg>
<svg style="left:181px;top:587px" width="6" height="8" viewBox="0 0 6 8"><path d="M1 0.5 L4.8 4 L1 7.5" fill="none" stroke="#505050" stroke-width="1.8"/></svg>
</div>
<div class="abs" id="right">
<div class="abs" style="left:179px;top:1px;width:1px;height:6px;background:#e5e5e5"></div>
<div class="abs" style="left:279px;top:1px;width:1px;height:6px;background:#e5e5e5"></div>
<div class="abs" style="left:429px;top:1px;width:1px;height:6px;background:#e5e5e5"></div>
</div>
<div class="abs" style="left:642px;top:689px;width:1px;height:20px;background:#d7d7d7"></div>
<div class="abs" style="left:775px;top:689px;width:1px;height:20px;background:#d7d7d7"></div>
<div class="abs" style="left:860px;top:689px;width:1px;height:20px;background:#d7d7d7"></div>
<div class="abs" id="dlg">
<div class="abs" id="dtitle"></div>
<div class="lt" style="left:8.01px;top:8.00px;font-size:12.4px;line-height:14px;letter-spacing:0;transform:scaleX(0.8790);transform-origin:0 0">DESKTOP-V32TQKL Properties</div>
<svg style="left:390px;top:8px" width="7" height="12" viewBox="0 0 7 12"><path d="M1.2 3.2 C1.2 0.6,5.6 0.6,5.6 3.2 C5.6 5.2,3.3 5.4,3.3 7.8" fill="none" stroke="#111" stroke-width="1.3"/><rect x="2.6" y="9.3" width="1.5" height="1.6" fill="#111"/></svg>
<svg style="left:433px;top:9px" width="10" height="10" viewBox="0 0 10 10"><path d="M0 0L10 10M10 0L0 10" stroke="#111" stroke-width="1.1" fill="none"/></svg>
<div class="tab" style="left:8px;top:39px;width:60px;height:18px"></div>
<div class="lt" style="left:19.27px;top:42.00px;font-size:11.9px;line-height:14px;letter-spacing:0;transform:scaleX(0.8842);transform-origin:0 0">General</div>
<div class="tab" style="left:68px;top:39px;width:107px;height:18px"></div>
<div class="lt" style="left:80.20px;top:42.00px;font-size:11.9px;line-height:14px;letter-spacing:0;transform:scaleX(0.8787);transform-origin:0 0">Operating System</div>
<div class="tab" style="left:175px;top:39px;width:76px;height:18px"></div>
<div class="lt" style="left:187.46px;top:42.00px;font-size:11.9px;line-height:14px;letter-spacing:0;transform:scaleX(0.8642);transform-origin:0 0">Member Of</div>
<div class="tab" style="left:251px;top:39px;width:75px;height:18px"></div>
<div class="lt" style="left:263.42px;top:42.00px;font-size:11.9px;line-height:14px;letter-spacing:0;transform:scaleX(0.9048);transform-origin:0 0">Delegation</div>
<div class="tab" style="left:326px;top:39px;width:124px;height:18px"></div>
<div class="lt" style="left:338.43px;top:42.00px;font-size:11.9px;line-height:14px;letter-spacing:0;transform:scaleX(0.8946);transform-origin:0 0">Password Replication</div>
<div class="abs" style="left:450px;top:39px;width:1px;height:18px;background:#d9d9d9"></div>
<div class="tab" style="left:8px;top:57px;width:50px;height:18px"></div>
<div class="lt" style="left:17.53px;top:60.00px;font-size:11.9px;line-height:14px;letter-spacing:0;transform:scaleX(0.8960);transform-origin:0 0">LAPS</div>
<div class="tab" style="left:58px;top:57px;width:62px;height:18px"></div>
<div class="lt" style="left:68.61px;top:60.00px;font-size:11.9px;line-height:14px;letter-spacing:0;transform:scaleX(0.9158);transform-origin:0 0">Location</div>
<div class="tab" style="left:120px;top:57px;width:81px;height:18px"></div>
<div class="lt" style="left:130.52px;top:60.00px;font-size:11.9px;line-height:14px;letter-spacing:0;transform:scaleX(0.8964);transform-origin:0 0">Managed By</div>
<div class="tab" style="left:201px;top:57px;width:52px;height:18px"></div>
<div class="lt" style="left:211.09px;top:60.00px;font-size:11.9px;line-height:14px;letter-spacing:0;transform:scaleX(0.9039);transform-origin:0 0">Object</div>
<div class="tab" style="left:253px;top:57px;width:59px;height:18px"></div>
<div class="lt" style="left:263.83px;top:60.00px;font-size:11.9px;line-height:14px;letter-spacing:0;transform:scaleX(0.8722);transform-origin:0 0">Security</div>
<div class="tab" style="left:312px;top:57px;width:51px;height:18px"></div>
<div class="lt" style="left:322.66px;top:60.00px;font-size:11.9px;line-height:14px;letter-spacing:0;transform:scaleX(0.8632);transform-origin:0 0">Dial-in</div>
<div class="abs" id="panel" style="left:6px;top:75px;width:447px;height:414px"></div>
<div class="abs" style="left:362px;top:55px;width:91px;height:21px;background:#fff;border:1px solid #dcdcdc;border-bottom:none"></div>
<div class="lt" style="left:373.68px;top:58.00px;font-size:11.9px;line-height:14px;letter-spacing:0;transform:scaleX(0.8867);transform-origin:0 0">Attribute Editor</div>
<div class="lt" style="left:21.38px;top:88.00px;font-size:11.9px;line-height:14px;letter-spacing:0;transform:scaleX(0.8730);transform-origin:0 0">Attributes:</div>
<div class="abs" id="list" style="left:21px;top:106px;width:357px;height:280px"></div>
<div class="abs" style="left:142px;top:108px;width:1px;height:24px;background:#e5e5e5"></div>
<div class="lt" style="left:29.08px;top:113.00px;font-size:11.9px;line-height:14px;letter-spacing:0;transform:scaleX(0.8728);transform-origin:0 0">Attribute</div>
<div class="lt" style="left:149.15px;top:113.00px;font-size:11.9px;line-height:14px;letter-spacing:0;transform:scaleX(0.8742);transform-origin:0 0">Value</div>
<div class="lt" style="left:28.85px;top:134.00px;font-size:11.9px;line-height:14px;letter-spacing:0;transform:scaleX(0.8943);transform-origin:0 0">catalogs</div>
<div class="lt" style="left:149.18px;top:134.00px;font-size:11.9px;line-height:14px;letter-spacing:0;transform:scaleX(0.8916);transform-origin:0 0">&lt;not set&gt;</div>
<div class="lt" style="left:28.84px;top:151.00px;font-size:11.9px;line-height:14px;letter-spacing:0;transform:scaleX(0.9123);transform-origin:0 0">cn</div>
<div class="lt" style="left:148.73px;top:151.00px;font-size:11.9px;line-height:14px;letter-spacing:0;transform:scaleX(0.8960);transform-origin:0 0">DESKTOP-V32TQKL</div>
<div class="lt" style="left:28.85px;top:168.00px;font-size:11.9px;line-height:14px;letter-spacing:0;transform:scaleX(0.8908);transform-origin:0 0">co</div>
<div class="lt" style="left:149.18px;top:168.00px;font-size:11.9px;line-height:14px;letter-spacing:0;transform:scaleX(0.8916);transform-origin:0 0">&lt;not set&gt;</div>
<div class="lt" style="left:28.84px;top:185.00px;font-size:11.9px;line-height:14px;letter-spacing:0;transform:scaleX(0.9132);transform-origin:0 0">codePage</div>
<div class="lt" style="left:149.74px;top:185.00px;font-size:11.9px;letter-spacing:0px;line-height:14px">0</div>
<div class="abs" style="left:27px;top:200px;width:332px;height:17px;background:#0078d7;outline:1px dotted #ff8a28;outline-offset:-1px"></div>
<div class="lt" style="left:28.86px;top:202.00px;font-size:11.9px;line-height:14px;letter-spacing:0;transform:scaleX(0.8646);transform-origin:0 0;color:#fff">comment</div>
<div class="lt" style="left:149.44px;top:202.00px;font-size:11.9px;line-height:14px;letter-spacing:0;transform:scaleX(0.8672);transform-origin:0 0;color:#fff">test.email@my_domain.com</div>
<div class="lt" style="left:28.86px;top:219.00px;font-size:11.9px;line-height:14px;letter-spacing:0;transform:scaleX(0.8753);transform-origin:0 0">company</div>
<div class="lt" style="left:149.18px;top:219.00px;font-size:11.9px;line-height:14px;letter-spacing:0;transform:scaleX(0.8916);transform-origin:0 0">&lt;not set&gt;</div>
<div class="lt" style="left:28.85px;top:236.00px;font-size:11.9px;line-height:14px;letter-spacing:0;transform:scaleX(0.8927);transform-origin:0 0">controlAccessRights</div>
<div class="lt" style="left:149.18px;top:236.00px;font-size:11.9px;line-height:14px;letter-spacing:0;transform:scaleX(0.8916);transform-origin:0 0">&lt;not set&gt;</div>
<div class="lt" style="left:28.85px;top:253.00px;font-size:11.9px;line-height:14px;letter-spacing:0;transform:scaleX(0.8865);transform-origin:0 0">countryCode</div>
<div class="lt" style="left:149.74px;top:253.00px;font-size:11.9px;letter-spacing:0px;line-height:14px">0</div>
<div class="lt" style="left:28.86px;top:270.00px;font-size:11.9px;line-height:14px;letter-spacing:0;transform:scaleX(0.8854);transform-origin:0 0">dBCSPwd</div>
<div class="lt" style="left:149.18px;top:270.00px;font-size:11.9px;line-height:14px;letter-spacing:0;transform:scaleX(0.8916);transform-origin:0 0">&lt;not set&gt;</div>
<div class="lt" style="left:28.86px;top:287.00px;font-size:11.9px;line-height:14px;letter-spacing:0;transform:scaleX(0.8730);transform-origin:0 0">defaultClassStore</div>
<div class="lt" style="left:149.18px;top:287.00px;font-size:11.9px;line-height:14px;letter-spacing:0;transform:scaleX(0.8916);transform-origin:0 0">&lt;not set&gt;</div>
<div class="lt" style="left:28.85px;top:304.00px;font-size:11.9px;line-height:14px;letter-spacing:0;transform:scaleX(0.9000);transform-origin:0 0">defaultLocalPolicyObj...</div>
<div class="lt" style="left:149.18px;top:304.00px;font-size:11.9px;line-height:14px;letter-spacing:0;transform:scaleX(0.8916);transform-origin:0 0">&lt;not set&gt;</div>
<div class="lt" style="left:28.87px;top:321.00px;font-size:11.9px;line-height:14px;letter-spacing:0;transform:scaleX(0.8639);transform-origin:0 0">department</div>
<div class="lt" style="left:149.18px;top:321.00px;font-size:11.9px;line-height:14px;letter-spacing:0;transform:scaleX(0.8916);transform-origin:0 0">&lt;not set&gt;</div>
<div class="lt" style="left:28.86px;top:338.00px;font-size:11.9px;line-height:14px;letter-spacing:0;transform:scaleX(0.8741);transform-origin:0 0">departmentNumber</div>
<div class="lt" style="left:149.18px;top:338.00px;font-size:11.9px;line-height:14px;letter-spacing:0;transform:scaleX(0.8916);transform-origin:0 0">&lt;not set&gt;</div>
<div class="abs" style="left:23px;top:352px;width:337px;height:16px;overflow:hidden">
<div class="lt" style="left:5.86px;top:3.00px;font-size:11.9px;line-height:14px;letter-spacing:0;transform:scaleX(0.8832);transform-origin:0 0">description</div>
<div class="lt" style="left:126.18px;top:3.00px;font-size:11.9px;line-height:14px;letter-spacing:0;transform:scaleX(0.8916);transform-origin:0 0">&lt;not set&gt;</div>
</div>
<div class="abs" style="left:360px;top:108px;width:16px;height:276px;background:#f0f0f0"></div>
<div class="abs" style="left:360px;top:134px;width:15px;height:17px;background:#cdcdcd"></div>
<svg style="left:363px;top:114px" width="9" height="7" viewBox="0 0 9 7"><path d="M0.9 5.8 L4.5 2 L8.1 5.8" fill="none" stroke="#505050" stroke-width="1.9"/></svg>
<svg style="left:363px;top:355px" width="9" height="7" viewBox="0 0 9 7"><path d="M0.9 1.2 L4.5 5 L8.1 1.2" fill="none" stroke="#505050" stroke-width="1.9"/></svg>
<div class="abs" style="left:23px;top:368px;width:337px;height:16px;background:#f0f0f0"></div>
<div class="abs" style="left:40px;top:368px;width:166px;height:15px;background:#cdcdcd"></div>
<svg style="left:28px;top:371px" width="7" height="9" viewBox="0 0 7 9"><path d="M5.8 0.9 L2 4.5 L5.8 8.1" fill="none" stroke="#505050" stroke-width="1.9"/></svg>
<svg style="left:348px;top:371px" width="7" height="9" viewBox="0 0 7 9"><path d="M1.2 0.9 L5 4.5 L1.2 8.1" fill="none" stroke="#505050" stroke-width="1.9"/></svg>
<div class="btn" style="left:22px;top:398px"></div>
<div class="lt" style="left:48.56px;top:402.00px;font-size:11.9px;line-height:14px;letter-spacing:0;transform:scaleX(0.8641);transform-origin:0 0">Edit</div>
<div class="btn" style="left:304px;top:398px"></div>
<div class="lt" style="left:328.47px;top:402.00px;font-size:11.9px;line-height:14px;letter-spacing:0;transform:scaleX(0.8508);transform-origin:0 0">Filter</div>
<div class="btn" style="left:138px;top:497px;border:2px solid #0078d7"></div>
<div class="lt" style="left:165.96px;top:501.00px;font-size:11.9px;line-height:14px;letter-spacing:0;transform:scaleX(0.9517);transform-origin:0 0">OK</div>
<div class="btn" style="left:219px;top:497px"></div>
<div class="lt" style="left:238.15px;top:501.00px;font-size:11.9px;line-height:14px;letter-spacing:0;transform:scaleX(0.9175);transform-origin:0 0">Cancel</div>
<div class="btn" style="left:300px;top:497px"></div>
<div class="lt" style="left:323.28px;top:501.00px;font-size:11.9px;line-height:14px;letter-spacing:0;transform:scaleX(0.8479);transform-origin:0 0">Apply</div>
<div class="btn" style="left:381px;top:497px"></div>
<div class="lt" style="left:405.93px;top:501.00px;font-size:11.9px;line-height:14px;letter-spacing:0;transform:scaleX(0.8914);transform-origin:0 0">Help</div>
</div>
<svg style="left:334px;top:54.6px" width="13" height="20" viewBox="0 0 13 20"><path d="M0.5 0.8 L0.5 16.6 L4.1 13.2 L6.9 19.2 L9.3 18.1 L6.6 12.3 L11.6 12.3 Z" fill="#fff" stroke="#000" stroke-width="1" stroke-linejoin="miter"/></svg>
</body>
</html>
